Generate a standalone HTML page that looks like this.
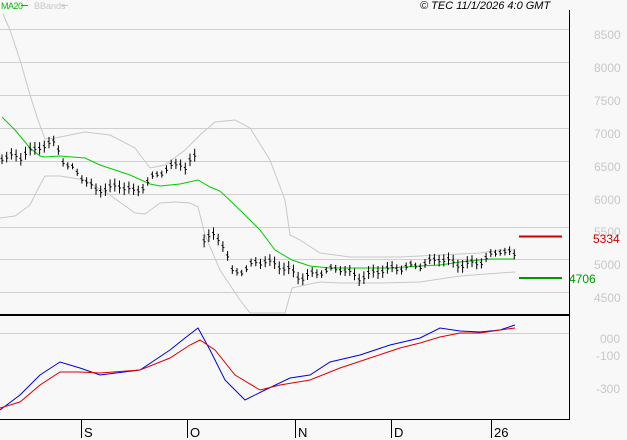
<!DOCTYPE html>
<html><head><meta charset="utf-8"><style>
body{margin:0;background:#f8f8f8;width:627px;height:440px;overflow:hidden}
svg{display:block;font-family:"Liberation Sans",sans-serif}
</style></head><body>
<svg id="s" width="627" height="440" viewBox="0 0 627 440">
<rect width="627" height="440" fill="#f8f8f8"/>
<g stroke="#cfcfcf" stroke-width="1">
<line x1="0" y1="29.5" x2="569" y2="29.5"/><line x1="0" y1="62.5" x2="569" y2="62.5"/><line x1="0" y1="95.5" x2="569" y2="95.5"/>
<line x1="0" y1="128.5" x2="569" y2="128.5"/><line x1="0" y1="161.5" x2="569" y2="161.5"/><line x1="0" y1="194.5" x2="569" y2="194.5"/>
<line x1="0" y1="227.5" x2="569" y2="227.5"/><line x1="0" y1="259.5" x2="569" y2="259.5"/><line x1="0" y1="292.5" x2="569" y2="292.5"/>
<line x1="0" y1="333.5" x2="569" y2="333.5"/>
</g>
<g fill="#c8c8c8" font-size="12">
<text x="594" y="39">8500</text><text x="594" y="72">8000</text><text x="594" y="105">7500</text>
<text x="594" y="138">7000</text><text x="594" y="171">6500</text><text x="594" y="204">6000</text>
<text x="594" y="236">5500</text><text x="594" y="269">5000</text><text x="594" y="302">4500</text>
<text x="600" y="343">000</text><text x="596" y="360">-100</text><text x="596" y="393">-300</text>
</g>
<text x="593" y="243" fill="#cc0000" font-size="12">5334</text>
<text x="569" y="283" fill="#009900" font-size="12">4706</text>
<line x1="519" y1="236.5" x2="562" y2="236.5" stroke="#cc0000" stroke-width="2"/>
<line x1="519" y1="278" x2="562" y2="278" stroke="#009900" stroke-width="2"/>
<text x="1" y="9" fill="#00bb00" font-size="9" letter-spacing="-0.5">MA20</text>
<line x1="21" y1="5.5" x2="28" y2="5.5" stroke="#00bb00"/>
<text x="34" y="9" fill="#c8c8c8" font-size="9">BBands</text>
<line x1="61" y1="5.5" x2="68" y2="5.5" stroke="#c8c8c8"/>
<text x="420" y="9" fill="#000" font-size="11" font-style="italic">© TEC 11/1/2026 4:0 GMT</text>
<g id="plots" fill="none"></g>
<line x1="569.5" y1="10" x2="569.5" y2="420" stroke="#000"/>
<line x1="0" y1="315" x2="569" y2="315" stroke="#000" stroke-width="2"/>
<line x1="0" y1="419.5" x2="570" y2="419.5" stroke="#000"/>
<g stroke="#000"><line x1="81.5" y1="420" x2="81.5" y2="438"/><line x1="187.5" y1="420" x2="187.5" y2="438"/><line x1="295.5" y1="420" x2="295.5" y2="438"/><line x1="391.5" y1="420" x2="391.5" y2="438"/><line x1="491.5" y1="420" x2="491.5" y2="438"/></g>
<g font-size="13" fill="#000"><text x="84" y="437">S</text><text x="190" y="437">O</text><text x="298" y="437">N</text><text x="394" y="437">D</text><text x="494" y="437">26</text></g>
</svg>
<script>
function pl(p,c){return '<polyline stroke="'+c+'" points="'+p.map(a=>a.join(',')).join(' ')+'"/>';}
var up=[[3,14],[10,30],[20,60],[30,95],[38,120],[45,139],[55,138],[85,132],[110,135],[135,148],[150,168],[165,165],[185,150],[200,135],[215,122],[235,120],[250,128],[270,160],[285,200],[290,235],[300,240],[320,253],[350,257],[400,257],[440,255],[480,253],[500,250],[515,250]];
var lo=[[0,218],[15,216],[30,205],[40,185],[45,176],[60,176],[85,180],[110,195],[135,213],[145,214],[160,203],[175,202],[190,203],[198,207],[205,235],[220,270],[240,300],[250,313],[285,313],[292,288],[305,285],[320,282],[340,283],[380,283],[420,282],[460,276],[500,273],[515,272]];
var ma=[[2,117],[15,130],[30,148],[40,156],[45,157],[60,156],[85,158],[100,165],[130,175],[150,184],[160,186],[180,184],[198,180],[210,187],[220,191],[240,210],[260,230],[275,250],[292,260],[310,266],[330,268],[360,268],[390,268],[420,266],[440,265],[460,262],[490,259],[515,259]];
var mb=[[0,410],[20,395],[40,375],[60,362],[80,368],[100,375],[140,370],[170,350],[185,338],[198,328],[210,350],[225,380],[245,400],[265,390],[290,378],[310,375],[330,362],[360,355],[390,345],[420,338],[440,328],[460,331],[480,332],[500,330],[515,325]];
var mr=[[0,408],[20,402],[40,385],[60,372],[80,372],[100,373],[140,370],[170,358],[190,345],[200,340],[215,350],[235,375],[260,390],[280,385],[310,380],[340,368],[370,358],[400,348],[420,343],[440,337],[460,333],[480,333],[500,330],[515,328]];
var pr=[[0,157],[15,156],[20,158],[25,152],[35,150],[42,145],[55,143],[60,152],[65,165],[75,170],[85,180],[95,190],[110,188],[120,185],[135,192],[145,185],[155,175],[165,170],[175,165],[180,162],[185,168],[196,155],[202,240],[215,235],[222,242],[228,258],[232,272],[245,270],[255,262],[265,261],[275,264],[290,270],[300,278],[320,272],[340,268],[360,278],[380,270],[400,268],[420,265],[440,258],[460,265],[480,262],[500,250],[515,255]];
function at(p,x){for(var i=1;i<p.length;i++)if(x<=p[i][0]){var a=p[i-1],b=p[i];return a[1]+(b[1]-a[1])*(x-a[0])/(b[0]-a[0]);}return p[p.length-1][1];}
var h=pl(up,'#c8c8c8')+pl(lo,'#c8c8c8')+pl(ma,'#00cc00')+pl(mb,'#0000dd')+pl(mr,'#dd0000');
for(var x=2;x<515;x+=4.7){if(x>197&&x<202)continue;var y=at(pr,x),r=Math.sin(x*7)*2.5,hh=6+Math.abs(Math.sin(x*1.3))*7;
h+='<line stroke="#000" x1="'+x+'" x2="'+x+'" y1="'+(y-hh/2+r)+'" y2="'+(y+hh/2+r)+'"/><line stroke="#000" x1="'+(x-1.5)+'" x2="'+x+'" y1="'+(y+r-1)+'" y2="'+(y+r-1)+'"/><line stroke="#000" x1="'+x+'" x2="'+(x+1.5)+'" y1="'+(y+r+1)+'" y2="'+(y+r+1)+'"/>';}
document.getElementById('plots').innerHTML=h;
</script>
</body></html>
